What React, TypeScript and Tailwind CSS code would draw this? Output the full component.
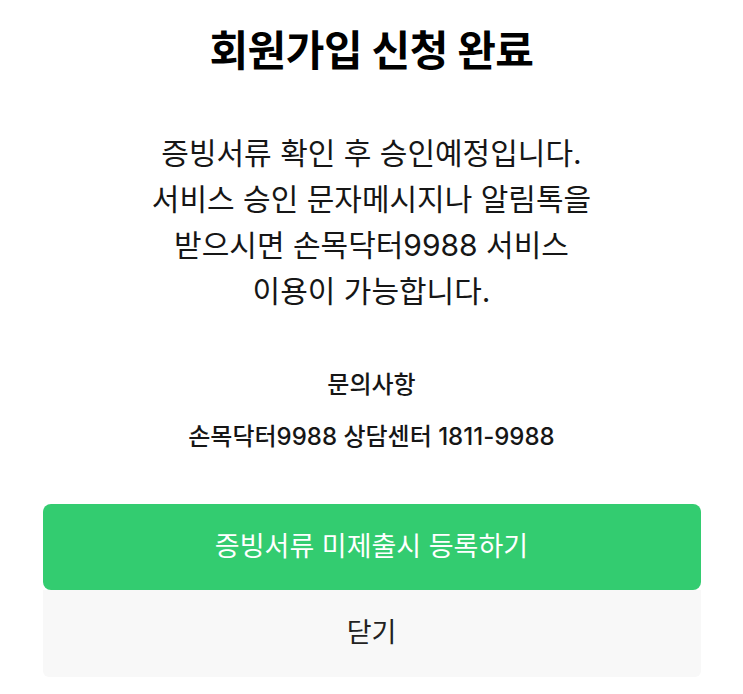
export default function App() {
  const lines = [
    '증빙서류 확인 후 승인예정입니다.',
    '서비스 승인 문자메시지나 알림톡을',
    '받으시면 손목닥터9988 서비스',
    '이용이 가능합니다.',
  ];

  return (
    <div
      className="w-[743px] h-[694px] bg-white flex flex-col items-center text-black"
      style={{ fontFamily: 'Inter, "Noto Sans CJK KR", "Noto Sans", sans-serif' }}
    >
      {/* Title */}
      <h1 className="mt-[24px] text-[42px] leading-[54px] font-bold tracking-[-0.5px]">회원가입 신청 완료</h1>

      {/* Body */}
      <div className="mt-[52px] flex flex-col items-center text-[30px] leading-[46px] text-[#161616]">
        {lines.map((l) => (
          <p key={l}>{l}</p>
        ))}
      </div>

      {/* Contact */}
      <div className="mt-[56px] flex flex-col items-center font-medium text-[#161616]">
        <p className="text-[24px] leading-[30px]">문의사항</p>
        <p className="mt-[22px] text-[24px] leading-[30px]">손목닥터9988 상담센터 1811-9988</p>
      </div>

      {/* Actions */}
      <div className="mt-[52px] w-[658px] flex flex-col">
        <button className="h-[86px] rounded-[8px] bg-[#33cc70] text-white text-[27px]">
          증빙서류 미제출시 등록하기
        </button>
        <button className="h-[87px] rounded-b-[6px] bg-[#f8f8f8] text-[#222] text-[27px]">
          닫기
        </button>
      </div>
    </div>
  );
}
